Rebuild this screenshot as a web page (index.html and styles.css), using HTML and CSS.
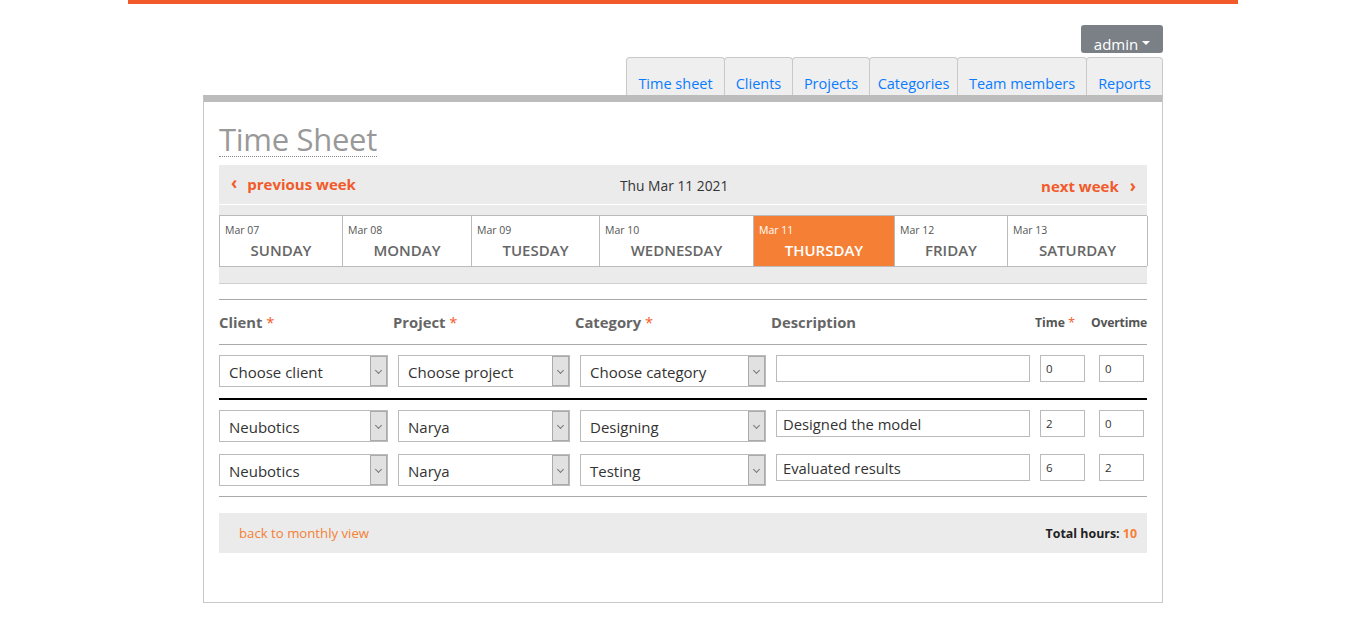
FILE: index.html
```html
<!DOCTYPE html>
<html>
<head>
<meta charset="utf-8">
<title>Time Sheet</title>
<link rel="stylesheet" href="styles.css">
</head>
<body>
<div class="topbar"></div>
<div class="wrap">
  <div class="userbar">
    <button class="admin">admin <span class="caret"></span></button>
  </div>
  <nav class="tabs">
    <a class="tab" href="#">Time sheet</a>
    <a class="tab" href="#">Clients</a>
    <a class="tab" href="#">Projects</a>
    <a class="tab" href="#">Categories</a>
    <a class="tab" href="#">Team members</a>
    <a class="tab" href="#">Reports</a>
  </nav>
  <main class="panel">
    <h1 class="title">Time Sheet</h1>
    <div class="weeknav">
      <a class="prev" href="#"><span class="chev">&#8249;</span>previous week</a>
      <span class="current">Thu Mar 11 2021</span>
      <a class="next" href="#">next week<span class="chev">&#8250;</span></a>
    </div>
    <div class="week">
      <div class="days">
        <div class="day"><span class="date">Mar 07</span><span class="name">SUNDAY</span></div>
        <div class="day"><span class="date">Mar 08</span><span class="name">MONDAY</span></div>
        <div class="day"><span class="date">Mar 09</span><span class="name">TUESDAY</span></div>
        <div class="day"><span class="date">Mar 10</span><span class="name">WEDNESDAY</span></div>
        <div class="day active"><span class="date">Mar 11</span><span class="name">THURSDAY</span></div>
        <div class="day"><span class="date">Mar 12</span><span class="name">FRIDAY</span></div>
        <div class="day"><span class="date">Mar 13</span><span class="name">SATURDAY</span></div>
      </div>
    </div>

    <div class="entries">
      <div class="row head">
        <div class="c1">Client <span class="req">*</span></div>
        <div class="c2">Project <span class="req">*</span></div>
        <div class="c3">Category <span class="req">*</span></div>
        <div class="c4">Description</div>
        <div class="c5 small">Time <span class="req">*</span></div>
        <div class="c6 small">Overtime</div>
      </div>
      <div class="newrow">
        <div class="row entry">
          <div class="c1"><div class="sel w1"><span class="val">Choose client</span><span class="arrow"></span></div></div>
          <div class="c2"><div class="sel w2"><span class="val">Choose project</span><span class="arrow"></span></div></div>
          <div class="c3"><div class="sel w3"><span class="val">Choose category</span><span class="arrow"></span></div></div>
          <div class="c4"><input class="txt desc" type="text" value=""></div>
          <div class="c5"><input class="txt num" type="text" value="0"></div>
          <div class="c6"><input class="txt num" type="text" value="0"></div>
        </div>
      </div>
      <div class="saved">
        <div class="row entry">
          <div class="c1"><div class="sel w1"><span class="val">Neubotics</span><span class="arrow"></span></div></div>
          <div class="c2"><div class="sel w2"><span class="val">Narya</span><span class="arrow"></span></div></div>
          <div class="c3"><div class="sel w3"><span class="val">Designing</span><span class="arrow"></span></div></div>
          <div class="c4"><input class="txt desc" type="text" value="Designed the model"></div>
          <div class="c5"><input class="txt num" type="text" value="2"></div>
          <div class="c6"><input class="txt num" type="text" value="0"></div>
        </div>
        <div class="row entry">
          <div class="c1"><div class="sel w1"><span class="val">Neubotics</span><span class="arrow"></span></div></div>
          <div class="c2"><div class="sel w2"><span class="val">Narya</span><span class="arrow"></span></div></div>
          <div class="c3"><div class="sel w3"><span class="val">Testing</span><span class="arrow"></span></div></div>
          <div class="c4"><input class="txt desc" type="text" value="Evaluated results"></div>
          <div class="c5"><input class="txt num" type="text" value="6"></div>
          <div class="c6"><input class="txt num" type="text" value="2"></div>
        </div>
      </div>
    </div>

    <div class="footer">
      <a class="back" href="#">back to monthly view</a>
      <span class="total">Total hours: <span class="hours">10</span></span>
    </div>
  </main>
</div>
</body>
</html>
```
FILE: styles.css
```css
* { box-sizing: border-box; }
body {
  margin: 0;
  font-family: "Open Sans", "Noto Sans", Arial, sans-serif;
  color: #333;
  background: #fff;
}
.topbar {
  width: 1110px;
  height: 4px;
  margin: 0 auto;
  background: #f25a2a;
}
.wrap {
  width: 960px;
  margin: 0 auto;
}
.userbar {
  display: flex;
  justify-content: flex-end;
  margin-top: 21px;
}
.admin {
  height: 28px;
  width: 82px;
  padding: 9px 0 0 0;
  border: 0;
  border-radius: 3px;
  background: #7b8087;
  color: #fff;
  font-family: inherit;
  font-size: 15px;
  display: flex;
  align-items: center;
  justify-content: center;
  gap: 4px;
}
.caret {
  display: inline-block;
  width: 0;
  height: 0;
  border-left: 4px solid transparent;
  border-right: 4px solid transparent;
  border-top: 4px solid #fff;
  margin-top: -2px;
}
.tabs {
  display: flex;
  justify-content: flex-end;
  margin-top: 4px;
  height: 38px;
}
.tab {
  display: flex;
  align-items: flex-end;
  justify-content: center;
  padding: 0 0 2px 0;
  background: #efefef;
  border: 1px solid #c9c9c9;
  border-bottom: 0;
  border-radius: 4px 4px 0 0;
  color: #0a7bff;
  font-size: 14.5px;
  text-decoration: none;
  margin-left: -1px;
}
.tab:nth-child(1) { width: 99px; }
.tab:nth-child(2) { width: 69px; }
.tab:nth-child(3) { width: 78px; }
.tab:nth-child(4) { width: 89px; }
.tab:nth-child(5) { width: 130px; }
.tab:nth-child(6) { width: 77px; }

.panel {
  border: 1px solid #c8c8c8;
  border-top: 7px solid #bcbcbc;
  padding: 15px 15px 49px 15px;
}
.title {
  display: inline-block;
  margin: 5px 0 8px 0;
  font-size: 31px;
  font-weight: 400;
  line-height: 34px;
  color: #999;
  border-bottom: 1px dotted #888;
  letter-spacing: -0.3px;
}
.weeknav {
  height: 39px;
  background: #ebebeb;
  display: flex;
  align-items: center;
  padding: 0 11px 0 12px;
  position: relative;
  margin-bottom: 1px;
}
.prev, .next {
  color: #f25a2a;
  font-weight: 700;
  font-size: 15px;
  text-decoration: none;
  display: flex;
  align-items: center;
}
.prev .chev { margin-right: 10px; font-size: 17px; font-weight: 700; line-height: 1; margin-top: -3px; }
.next .chev { margin-left: 11px; font-size: 17px; font-weight: 700; line-height: 1; margin-top: -1px; }
.prev { margin-top: -2px; }
.next { margin-left: auto; margin-top: 2px; }
.current {
  position: absolute;
  left: 401px;
  top: 11px;
  font-size: 13.8px;
  color: #333;
}
.week {
  background: #ebebeb;
  padding: 10px 0 16px 0;
  border-bottom: 1px solid #cfcfcf;
}
.days {
  display: grid;
  grid-template-columns: 123px 129px 128px 154px 141px 113px 140px;
  border: 1px solid #bbb;
  border-right: 0;
  background: #fff;
}
.day {
  height: 50px;
  border-right: 1px solid #bbb;
  display: flex;
  flex-direction: column;
  padding: 7px 0 0 0;
}
.day .date {
  font-size: 10.5px;
  color: #555;
  padding-left: 5px;
  line-height: 15px;
}
.day .name {
  text-align: center;
  font-size: 15px;
  font-weight: 600;
  color: #666;
  line-height: 22px;
  margin-top: 1px;
}
.day.active { background: #f58035; }
.day.active .date, .day.active .name { color: #fff; }

.entries {
  margin-top: 15px;
  border-top: 1px solid #a9a9a9;
  border-bottom: 1px solid #a9a9a9;
}
.row {
  display: grid;
  grid-template-columns: 174px 182px 196px 264px 55px 57px;
}
.row.head {
  height: 45px;
  align-items: center;
  border-bottom: 1px solid #a9a9a9;
  font-weight: 700;
  font-size: 14.8px;
  color: #666;
}
.row.head .small { font-size: 12.2px; color: #555; }
.row.head .c6 { text-align: right; letter-spacing: -0.2px; }
.req { color: #f25a2a; font-weight: 400; }
.newrow {
  padding: 10px 0 11px 0;
  border-bottom: 2px solid #000;
}
.saved {
  padding: 10px 0 10px 0;
  display: flex;
  flex-direction: column;
  gap: 12px;
}
.entry { align-items: start; }
.entry .c2, .entry .c3, .entry .c4, .entry .c5 { padding-left: 5px; }
.entry .c6 { padding-left: 9px; }
.sel {
  position: relative;
  height: 32px;
  border: 1px solid #bbb;
  background: #fff;
  display: flex;
  align-items: center;
  padding: 1px 0 0 9px;
  font-size: 15px;
  color: #333;
}
.sel.w1 { width: 169px; }
.sel.w2 { width: 172px; }
.sel.w3 { width: 186px; }
.sel .arrow {
  position: absolute;
  right: 0;
  top: 0;
  bottom: 0;
  width: 17px;
  background: #e1e1e1;
  border: 1px solid #aaa;
}
.sel .arrow::after {
  content: "";
  position: absolute;
  left: 5px;
  top: 11px;
  width: 4px;
  height: 4px;
  border-right: 1px solid #777;
  border-bottom: 1px solid #777;
  transform: rotate(45deg);
}
.txt {
  height: 27px;
  border: 1px solid #bbb;
  font-family: inherit;
  color: #333;
  padding: 0 6px;
  outline: none;
}
.txt.desc { width: 254px; font-size: 14.8px; }
.txt.num { width: 45px; font-size: 11.5px; padding: 0 5px; }

.footer {
  margin-top: 16px;
  height: 40px;
  background: #ebebeb;
  display: flex;
  align-items: center;
  justify-content: space-between;
  padding: 0 10px 0 20px;
}
.back {
  color: #f58035;
  font-size: 13.2px;
  text-decoration: none;
}
.total {
  font-size: 12.4px;
  font-weight: 700;
  color: #222;
}
.hours { color: #f58035; }
```
